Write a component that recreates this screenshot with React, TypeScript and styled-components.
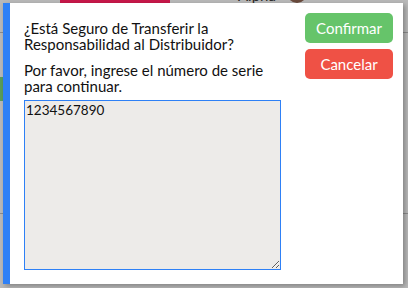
import React from "react";
import styled, { createGlobalStyle } from "styled-components";

const Global = createGlobalStyle`
  html, body { margin: 0; padding: 0; }
  body { width: 408px; height: 288px; overflow: hidden; background: #b8b8b8; }
  * { box-sizing: border-box; }
`;

const Page = styled.div`
  position: relative;
  width: 408px;
  height: 288px;
  overflow: hidden;
  background: #b9b9b9;
  font-family: "Lato", "Noto Sans", sans-serif;
`;

const Header = styled.div`
  height: 33px;
  border-bottom: 1px solid #8c8c8c;
  display: flex;
  align-items: flex-start;
  padding-left: 60px;
`;

const RedTab = styled.div`
  width: 110px;
  height: 3px;
  background: #c8184a;
`;

const UserName = styled.span`
  margin-left: 68px;
  margin-top: -12px;
  font-size: 15px;
  line-height: 15px;
  color: #2a2a2a;
`;

const Avatar = styled.div`
  margin-left: 11px;
  margin-top: -17px;
  width: 20px;
  height: 20px;
  border-radius: 50%;
  background: #6a4a3c;
`;

const Body = styled.div`
  height: 181px;
  border-bottom: 1px solid #8c8c8c;
  padding-top: 44px;
`;

const SideButton = styled.div`
  width: 40px;
  height: 24px;
  background: #5b9d5b;
`;

const Modal = styled.div`
  position: absolute;
  left: 3px;
  top: 3px;
  width: 400px;
  height: 281px;
  background: #ffffff;
  border-left: 7px solid #2e80f6;
  box-shadow: 2px 2px 5px rgba(0, 0, 0, 0.3);
  display: flex;
  gap: 24px;
  padding: 10px 10px 14px 14px;
`;

const MainCol = styled.div`
  width: 257px;
  display: flex;
  flex-direction: column;
`;

const Text = styled.p<{ $top: number }>`
  margin: ${(p) => p.$top}px 0 0 0;
  font-size: 15px;
  line-height: 16px;
  color: #111;
`;

const Serial = styled.textarea`
  margin-top: 6px;
  width: 257px;
  height: 170px;
  border: 1px solid #2e80f6;
  outline: none;
  background: #edebe9;
  font-family: "Lato", "Noto Sans", sans-serif;
  font-size: 13.5px;
  line-height: 16px;
  color: #111;
  padding: 1px 1px;
`;

const ButtonCol = styled.div`
  width: 88px;
  display: flex;
  flex-direction: column;
  gap: 6px;
`;

const Btn = styled.button<{ $color: string }>`
  height: 30px;
  border: none;
  border-radius: 5px;
  background: ${(p) => p.$color};
  color: #ffffff;
  font-family: "Lato", "Noto Sans", sans-serif;
  font-size: 15px;
  padding: 0;
`;

export default function App() {
  return (
    <Page>
      <Global />
      <Header>
        <RedTab />
        <UserName>Alpha</UserName>
        <Avatar />
      </Header>
      <Body>
        <SideButton />
      </Body>
      <Modal>
        <MainCol>
          <Text $top={7}>
            ¿Está Seguro de Transferir la
            <br />
            Responsabilidad al Distribuidor?
          </Text>
          <Text $top={10}>
            Por favor, ingrese el número de serie
            <br />
            para continuar.
          </Text>
          <Serial defaultValue="1234567890" />
        </MainCol>
        <ButtonCol>
          <Btn $color="#66c46a">Confirmar</Btn>
          <Btn $color="#ef5145">Cancelar</Btn>
        </ButtonCol>
      </Modal>
    </Page>
  );
}
